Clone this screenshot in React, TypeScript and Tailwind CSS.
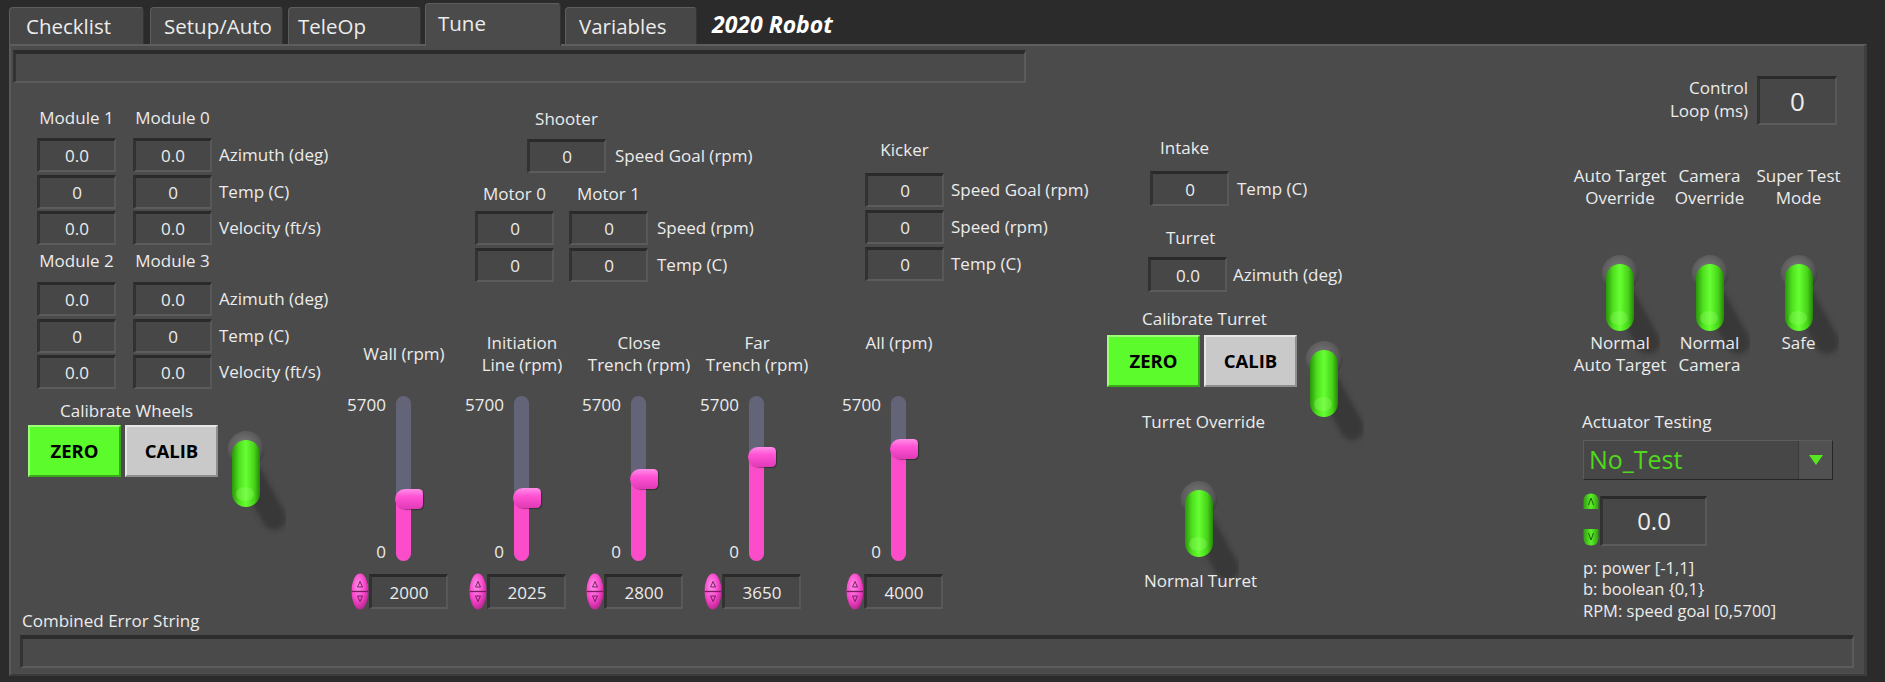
import React from "react";

const NB =
  "flex items-center justify-center bg-[#474747] border-t-[3px] border-l-[3px] border-b-2 border-r-2 border-t-[#2a2a2a] border-l-[#323232] border-b-[#5c5c5c] border-r-[#585858] leading-none";

function NumBox({ v, className = "w-[79px] h-[34px]" }: { v: string; className?: string }) {
  return <div className={`${NB} ${className}`}>{v}</div>;
}

function Toggle() {
  return (
    <svg width="64" height="100" viewBox="0 0 64 100" className="block overflow-visible">
      <defs>
        <radialGradient id="tgBall" cx="45%" cy="40%" r="60%">
          <stop offset="0%" stopColor="#7c7c7c" />
          <stop offset="70%" stopColor="#5a5a5a" />
          <stop offset="100%" stopColor="#3c3c3c" />
        </radialGradient>
        <linearGradient id="tgLever" x1="0" y1="0" x2="1" y2="0">
          <stop offset="0%" stopColor="#2a960b" />
          <stop offset="25%" stopColor="#4fe01e" />
          <stop offset="50%" stopColor="#66ff33" />
          <stop offset="80%" stopColor="#47d218" />
          <stop offset="100%" stopColor="#25870a" />
        </linearGradient>
        <filter id="tgBlur" x="-50%" y="-50%" width="200%" height="200%">
          <feGaussianBlur stdDeviation="2.5" />
        </filter>
      </defs>
      <line x1="24" y1="44" x2="48" y2="88" stroke="#343434" strokeWidth="24" strokeLinecap="round" filter="url(#tgBlur)" opacity="0.85" />
      <circle cx="20" cy="19.5" r="18.5" fill="url(#tgBall)" />
      <rect x="6" y="10" width="28" height="67" rx="14" fill="url(#tgLever)" />
      <ellipse cx="19" cy="64" rx="9" ry="7" fill="#9dff70" opacity="0.3" />
    </svg>
  );
}

function PinkSpinner() {
  return (
    <svg width="18" height="37" viewBox="0 0 18 37" className="block">
      <defs>
        <radialGradient id="pkSp" cx="40%" cy="35%" r="70%">
          <stop offset="0" stopColor="#ff8fe8" />
          <stop offset="0.55" stopColor="#f848cc" />
          <stop offset="1" stopColor="#b4218c" />
        </radialGradient>
      </defs>
      <ellipse cx="9" cy="18.5" rx="8.5" ry="18" fill="url(#pkSp)" />
      <line x1="0.5" y1="18.5" x2="17.5" y2="18.5" stroke="#7a1d60" strokeWidth="1.3" />
      <path d="M6.5 14 L9 8.5 L11.5 14 Z" fill="none" stroke="#6a1a55" strokeWidth="0.9" />
      <path d="M6.5 23 L9 28.5 L11.5 23 Z" fill="none" stroke="#6a1a55" strokeWidth="0.9" />
    </svg>
  );
}

function GreenSpinner() {
  return (
    <svg width="16" height="53" viewBox="0 0 16 53" className="block">
      <defs>
        <linearGradient id="grSp" x1="0" y1="0" x2="1" y2="0">
          <stop offset="0" stopColor="#2f9e10" />
          <stop offset="0.5" stopColor="#5cf02a" />
          <stop offset="1" stopColor="#2f9e10" />
        </linearGradient>
      </defs>
      <path d="M0.5 16 L0.5 8 Q0.5 0.5 8 0.5 Q15.5 0.5 15.5 8 L15.5 16 Z" fill="url(#grSp)" />
      <path d="M5.5 12 L8 5 L10.5 12" fill="none" stroke="#1f5e0a" strokeWidth="1" />
      <path d="M0.5 36 L15.5 36 L15.5 45 Q15.5 52.5 8 52.5 Q0.5 52.5 0.5 45 Z" fill="url(#grSp)" />
      <path d="M5.5 40 L8 47 L10.5 40" fill="none" stroke="#1f5e0a" strokeWidth="1" />
    </svg>
  );
}

function Slider({ lines, top, value }: { lines: string[]; top?: boolean; value: number }) {
  const frac = value / 5700;
  const c = 153 - frac * 143;
  return (
    <div className="w-[106px] flex flex-col shrink-0">
      <div
        className={`h-[44px] flex flex-col items-center ${top ? "justify-start" : "justify-center"} leading-[22px] whitespace-nowrap`}
      >
        {lines.map((l) => (
          <span key={l}>{l}</span>
        ))}
      </div>
      <div className="mt-[20px] flex h-[165px]">
        <div className="w-[35px] flex flex-col justify-between items-end leading-[18px]">
          <span>5700</span>
          <span>0</span>
        </div>
        <div className="ml-[10px] relative w-[15px] h-[165px] rounded-full bg-[#646478]">
          <div className="absolute left-0 bottom-0 w-[15px] rounded-b-full bg-[#fb4cc9]" style={{ height: 165 - c }} />
          <div
            className="absolute left-[-1px] w-[28px] h-[20px] rounded-[11px_5px_5px_11px] bg-[linear-gradient(180deg,#ff8ee8_0%,#ff52d4_40%,#e03ab6_100%)] shadow-[1px_1px_1px_rgba(0,0,0,0.35)]"
            style={{ top: c - 10 }}
          />
        </div>
      </div>
      <div className="mt-[12px] flex items-center h-[37px]">
        <PinkSpinner />
        <NumBox v={String(value)} className="w-[79px] h-[35px]" />
      </div>
    </div>
  );
}

function ZeroCalib() {
  return (
    <>
      <div className="w-[93px] h-[52px] flex items-center justify-center bg-[#5cfb2c] border-2 border-t-[#9bff7a] border-l-[#9bff7a] border-b-[#3aa81a] border-r-[#3aa81a] text-black font-bold text-[18.5px]">
        ZERO
      </div>
      <div className="ml-[4px] w-[93px] h-[52px] flex items-center justify-center bg-[#c9c9c9] border-2 border-t-[#e6e6e6] border-l-[#e6e6e6] border-b-[#8e8e8e] border-r-[#8e8e8e] text-black font-bold text-[18.5px]">
        CALIB
      </div>
    </>
  );
}

function BoxRow({ a, b, label, gap = "ml-[17px]", lg = "ml-[7px]" }: { a: string; b: string; label: string; gap?: string; lg?: string }) {
  return (
    <div className="flex items-center h-[34px]">
      <NumBox v={a} />
      <NumBox v={b} className={`${gap} w-[79px] h-[34px]`} />
      <span className={`${lg} whitespace-nowrap`}>{label}</span>
    </div>
  );
}

function Tab({ label, w, pl, sel }: { label: string; w: string; pl: string; sel?: boolean }) {
  return (
    <div
      className={`${w} ${pl} ${
        sel ? "h-[43px] pt-[8px] bg-[#4b4b4b] relative z-10 -mb-[2px]" : "h-[37px] pt-[7px] bg-[#474747]"
      } rounded-t-[4px] border-t border-l border-r border-t-[#5e5e5e] border-l-[#5e5e5e] border-r-[#353535] leading-[22px] text-[20.5px] shrink-0 whitespace-nowrap`}
    >
      {label}
    </div>
  );
}

export default function App() {
  return (
    <div className="w-[1885px] h-[682px] bg-[#2b2b2b] overflow-hidden font-['Open_Sans',sans-serif] text-[17px] text-[#ececec]">
      {/* Tabs */}
      <div className="h-[44px] flex items-end pl-[9px]">
        <Tab label="Checklist" w="w-[135px]" pl="pl-[16px]" />
        <div className="w-[6px]" />
        <Tab label="Setup/Auto" w="w-[133px]" pl="pl-[13px]" />
        <div className="w-[5px]" />
        <Tab label="TeleOp" w="w-[133px]" pl="pl-[9px]" />
        <div className="w-[4px]" />
        <Tab label="Tune" w="w-[136px]" pl="pl-[12px]" sel />
        <div className="w-[4px]" />
        <Tab label="Variables" w="w-[132px]" pl="pl-[13px]" />
        <div className="ml-[15px] h-[37px] pt-[3px] leading-[28px] text-[23px] font-bold italic text-white">2020 Robot</div>
      </div>

      {/* Panel */}
      <div className="ml-[9px] w-[1858px] h-[632px] bg-[#4b4b4b] border-t-2 border-l-2 border-r-[3px] border-b-2 border-t-[#5e5e5e] border-l-[#5a5a5a] border-r-[#3e3e3e] border-b-[#3b3b3b] flex flex-col">
        <div className="h-[564px] flex shrink-0">
          {/* Left area */}
          <div className="w-[1549px] flex flex-col shrink-0">
            <div className="ml-[2px] mt-[4px] w-[1013px] h-[37px] bg-[#4a4a4a] border-t-4 border-l-[3px] border-b-2 border-r-2 border-t-[#2c2c2c] border-l-[#333333] border-b-[#5c5c5c] border-r-[#5c5c5c]" />
            <div className="flex items-start">
              {/* Modules */}
              <div className="ml-[17px] w-[323px] flex flex-col shrink-0">
                <div className="mt-[24px] flex pl-[9px] leading-[22px]">
                  <div className="w-[79px] text-center">Module 1</div>
                  <div className="ml-[17px] w-[79px] text-center">Module 0</div>
                </div>
                <div className="mt-[9px] flex flex-col gap-[2.5px] pl-[9px]">
                  <BoxRow a="0.0" b="0.0" label="Azimuth (deg)" />
                  <BoxRow a="0" b="0" label="Temp (C)" />
                  <BoxRow a="0.0" b="0.0" label="Velocity (ft/s)" />
                </div>
                <div className="mt-[5px] flex pl-[9px] leading-[22px]">
                  <div className="w-[79px] text-center">Module 2</div>
                  <div className="ml-[17px] w-[79px] text-center">Module 3</div>
                </div>
                <div className="mt-[10px] flex flex-col gap-[2.5px] pl-[9px]">
                  <BoxRow a="0.0" b="0.0" label="Azimuth (deg)" />
                  <BoxRow a="0" b="0" label="Temp (C)" />
                  <BoxRow a="0.0" b="0.0" label="Velocity (ft/s)" />
                </div>
                <div className="mt-[11px] ml-[32px] leading-[22px]">Calibrate Wheels</div>
                <div className="mt-[3px] flex items-start h-[52px]">
                  <ZeroCalib />
                  <div className="ml-[8px] mt-[5px]">
                    <Toggle />
                  </div>
                </div>
              </div>

              {/* Middle */}
              <div className="w-[756px] flex flex-col shrink-0">
                <div className="flex items-start">
                  {/* Shooter */}
                  <div className="ml-[124px] w-[290px] flex flex-col shrink-0">
                    <div className="mt-[25px] flex items-end pl-[52px]">
                      <div className="w-[79px] flex flex-col items-center">
                        <div className="leading-[22px]">Shooter</div>
                        <NumBox v="0" className="mt-[9px] w-[79px] h-[34px]" />
                      </div>
                      <div className="ml-[9px] h-[34px] flex items-center whitespace-nowrap">Speed Goal (rpm)</div>
                    </div>
                    <div className="mt-[10px] flex leading-[22px]">
                      <div className="w-[79px] text-center">Motor 0</div>
                      <div className="ml-[15px] w-[79px] text-center">Motor 1</div>
                    </div>
                    <div className="mt-[6px] flex flex-col gap-[3px]">
                      <BoxRow a="0" b="0" label="Speed (rpm)" gap="ml-[15px]" lg="ml-[9px]" />
                      <BoxRow a="0" b="0" label="Temp (C)" gap="ml-[15px]" lg="ml-[9px]" />
                    </div>
                  </div>
                  {/* Kicker */}
                  <div className="ml-[100px] flex flex-col shrink-0">
                    <div className="mt-[56px] w-[79px] text-center leading-[22px]">Kicker</div>
                    <div className="mt-[12px] flex flex-col gap-[3px]">
                      {[
                        ["0", "Speed Goal (rpm)"],
                        ["0", "Speed (rpm)"],
                        ["0", "Temp (C)"],
                      ].map(([v, l]) => (
                        <div key={l} className="flex items-center h-[34px]">
                          <NumBox v={v} />
                          <span className="ml-[7px] whitespace-nowrap">{l}</span>
                        </div>
                      ))}
                    </div>
                  </div>
                </div>
                {/* Sliders */}
                <div className="mt-[50px] flex items-start">
                  <Slider lines={["Wall (rpm)"]} value={2000} />
                  <div className="w-[12px] shrink-0" />
                  <Slider lines={["Initiation", "Line (rpm)"]} value={2025} />
                  <div className="w-[11px] shrink-0" />
                  <Slider lines={["Close", "Trench (rpm)"]} value={2800} />
                  <div className="w-[12px] shrink-0" />
                  <Slider lines={["Far", "Trench (rpm)"]} value={3650} />
                  <div className="w-[36px] shrink-0" />
                  <Slider lines={["All (rpm)"]} top value={4000} />
                </div>
              </div>

              {/* Intake / Turret */}
              <div className="w-[453px] flex flex-col shrink-0">
                <div className="mt-[54px] ml-[53px] leading-[22px]">Intake</div>
                <div className="mt-[12px] ml-[43px] flex items-center h-[35px]">
                  <NumBox v="0" className="w-[79px] h-[35px]" />
                  <span className="ml-[8px] whitespace-nowrap">Temp (C)</span>
                </div>
                <div className="mt-[21px] ml-[59px] leading-[22px]">Turret</div>
                <div className="mt-[8px] ml-[41px] flex items-center h-[35px]">
                  <NumBox v="0.0" className="w-[79px] h-[35px]" />
                  <span className="ml-[6px] whitespace-nowrap">Azimuth (deg)</span>
                </div>
                <div className="mt-[16px] ml-[35px] leading-[22px]">Calibrate Turret</div>
                <div className="mt-[5px] flex items-start h-[52px]">
                  <ZeroCalib />
                  <div className="ml-[7px] mt-[5px]">
                    <Toggle />
                  </div>
                </div>
                <div className="mt-[24px] ml-[35px] leading-[22px]">Turret Override</div>
                <div className="mt-[47px] ml-[72px] h-[90px]">
                  <Toggle />
                </div>
                <div className="ml-[37px] leading-[22px]">Normal Turret</div>
              </div>
            </div>
          </div>

          {/* Right column */}
          <div className="w-[305px] flex flex-col shrink-0">
            <div className="mt-[30px] flex items-start">
              <div className="w-[188px] text-right leading-[23px]">
                <div>Control</div>
                <div>Loop (ms)</div>
              </div>
              <NumBox v="0" className="ml-[9px] w-[80px] h-[49px] text-[26px]" />
            </div>
            <div className="mt-[40px] ml-[15px] flex items-start">
              {[
                { w: "w-[90px]", l: ["Auto Target", "Override"], b: ["Normal", "Auto Target"] },
                { w: "w-[89px]", l: ["Camera", "Override"], b: ["Normal", "Camera"] },
                { w: "w-[89px]", l: ["Super Test", "Mode"], b: ["Safe"] },
              ].map((c) => (
                <div key={c.l[0]} className={`${c.w} flex flex-col items-center leading-[22px] shrink-0`}>
                  {c.l.map((t) => (
                    <div key={t} className="whitespace-nowrap">{t}</div>
                  ))}
                  <div className="mt-[45px] w-[40px] h-[78px]">
                    <Toggle />
                  </div>
                  {c.b.map((t) => (
                    <div key={t} className="whitespace-nowrap">{t}</div>
                  ))}
                </div>
              ))}
            </div>
            <div className="mt-[35px] ml-[22px] leading-[22px]">Actuator Testing</div>
            <div className="mt-[7px] ml-[23px] w-[250px] h-[44px] flex bg-[#474747] border border-t-[#5c5c5c] border-l-[#5c5c5c] border-b-[#262626] border-r-[#262626]">
              <div className="flex-1 flex items-center pl-[5px] text-[25px] text-[#4fd81c]">No_Test</div>
              <div className="w-[34px] flex items-center justify-center bg-[#515151] border-l border-l-[#3a3a3a]">
                <svg width="16" height="12" viewBox="0 0 16 12">
                  <path d="M1 1 L15 1 L8 11 Z" fill="#55e81f" />
                </svg>
              </div>
            </div>
            <div className="mt-[13px] ml-[23px] flex items-start">
              <GreenSpinner />
              <NumBox v="0.0" className="mt-[3px] ml-[1px] w-[107px] h-[50px] text-[24px]" />
            </div>
            <div className="mt-[11px] ml-[23px] leading-[21.5px] text-[16.5px] whitespace-nowrap">
              <div>p: power [-1,1]</div>
              <div>b: boolean {"{0,1}"}</div>
              <div>RPM: speed goal [0,5700]</div>
            </div>
          </div>
        </div>

        {/* Bottom */}
        <div className="flex flex-col">
          <div className="ml-[11px] leading-[22px]">Combined Error String</div>
          <div className="mt-[3px] ml-[9px] w-[1834px] h-[33px] bg-[#4a4a4a] border-t-4 border-l-[3px] border-b-2 border-r-2 border-t-[#2c2c2c] border-l-[#333333] border-b-[#5c5c5c] border-r-[#5c5c5c]" />
        </div>
      </div>
    </div>
  );
}
